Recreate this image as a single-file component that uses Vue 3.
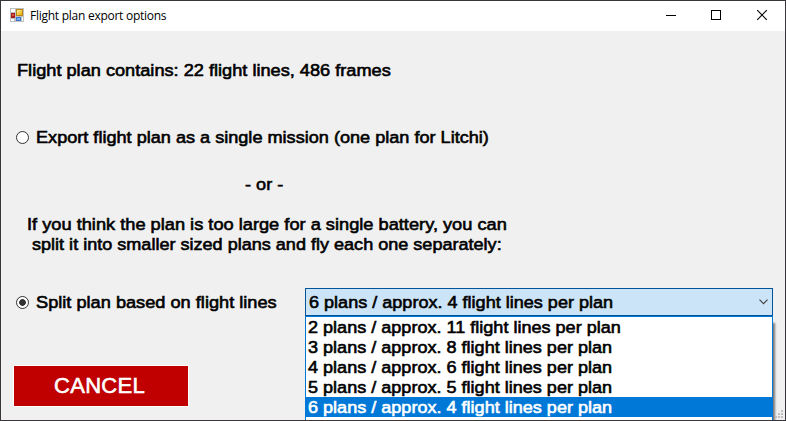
<script setup>
import { ref } from 'vue'

const mode = ref('split')
const selected = ref(4)
const plans = [
  '2 plans / approx. 11 flight lines per plan',
  '3 plans / approx. 8 flight lines per plan',
  '4 plans / approx. 6 flight lines per plan',
  '5 plans / approx. 5 flight lines per plan',
  '6 plans / approx. 4 flight lines per plan',
]
</script>

<template>
  <div class="window">
    <header class="titlebar">
      <svg class="app-icon" width="14" height="14" viewBox="0 0 14 14" shape-rendering="crispEdges">
        <defs>
          <linearGradient id="gold" x1="0" y1="0" x2="1" y2="1">
            <stop offset="0" stop-color="#fff0a0" />
            <stop offset="1" stop-color="#e8a800" />
          </linearGradient>
        </defs>
        <rect width="14" height="14" fill="#c0c0c0" />
        <rect x="1" y="1" width="4" height="3" fill="#fff" />
        <rect x="1" y="11" width="3" height="2" fill="#fff" />
        <rect x="12" y="9" width="1" height="4" fill="#fff" />
        <rect x="1" y="5" width="4" height="5" fill="#a51c1c" />
        <rect x="2" y="6" width="2" height="2" fill="#d55848" />
        <rect x="6" y="1" width="7" height="7" fill="#b78a18" />
        <rect x="7" y="2" width="5" height="5" fill="url(#gold)" />
        <rect x="6" y="9" width="5" height="4" fill="#3c78d0" />
        <rect x="7" y="10" width="3" height="2" fill="#76adf2" />
      </svg>
      <span class="title">Flight plan export options</span>
      <nav class="controls">
        <svg width="46" height="30" viewBox="0 0 46 30" shape-rendering="crispEdges"><path d="M18 14.5h10" stroke="#000" /></svg>
        <svg width="46" height="30" viewBox="0 0 46 30" shape-rendering="crispEdges"><path d="M17.5 9.500h9v9h-9z" fill="none" stroke="#000" /></svg>
        <svg width="46" height="30" viewBox="0 0 46 30"><path d="M17.200 9.200l9.600 9.600M26.800 9.200l-9.600 9.600" stroke="#000" stroke-width="1.100" /></svg>
      </nav>
    </header>

    <main class="body">
      <p class="summary text">Flight plan contains: 22 flight lines, 486 frames</p>

      <label class="choice single" @click="mode = 'single'">
        <span class="radio" :class="{ on: mode === 'single' }"></span>
        <span class="text">Export flight plan as a single mission (one plan for Litchi)</span>
      </label>

      <p class="or text">- or -</p>

      <div class="hint">
        <p class="hint-a text">If you think the plan is too large for a single battery, you can</p>
        <p class="hint-b text">split it into smaller sized plans and fly each one separately:</p>
      </div>

      <div class="row">
        <label class="choice split" @click="mode = 'split'">
          <span class="radio" :class="{ on: mode === 'split' }"></span>
          <span class="text">Split plan based on flight lines</span>
        </label>
        <div class="combo">
          <span class="text">{{ plans[selected] }}</span>
          <svg class="chevron" width="9" height="6" viewBox="0 0 9 6"><path d="M.5.7l4 4 4-4" fill="none" stroke="#404040" stroke-width="1.100" /></svg>
          <ul class="list">
            <li
              v-for="(plan, i) in plans"
              :key="plan"
              :class="{ active: i === selected }"
              @click="selected = i"
            ><span class="text">{{ plan }}</span></li>
          </ul>
        </div>
      </div>

      <button class="cancel"><span>CANCEL</span></button>

      <svg class="grip" width="9" height="9" viewBox="0 0 9 9" shape-rendering="crispEdges">
        <path d="M6 0h2v2h-2zM3 3h2v2h-2zM6 3h2v2h-2zM0 6h2v2h-2zM3 6h2v2h-2zM6 6h2v2h-2z" fill="#bfbfbf" />
      </svg>
    </main>
  </div>
</template>

<style>
html, body { margin: 0; overflow: hidden; }
</style>

<style scoped>
* { box-sizing: border-box; }
p, ul { margin: 0; padding: 0; }
.window {
  width: 786px;
  height: 421px;
  border: 1px solid #38363a;
  background: #f0f0f0;
  display: flex;
  flex-direction: column;
  overflow: hidden;
  color: #000;
  font-family: "Liberation Sans", Arial, sans-serif;
}
.titlebar {
  height: 30px;
  flex: none;
  background: #fff;
  display: flex;
  align-items: center;
  padding-left: 9px;
}
.app-icon { margin-bottom: 2px; }
.title {
  margin-left: 6px;
  font: 12px/16px "Open Sans", "Noto Sans", sans-serif;
  letter-spacing: -0.26px;
  white-space: nowrap;
}
.controls { margin: 0 -1px 0 auto; display: flex; }
.body { position: relative; flex: 1; display: flex; flex-direction: column; align-items: flex-start; }
.text {
  display: block;
  font-size: 17px;
  line-height: 20px;
  white-space: nowrap;
  transform: scaleX(1.065);
  transform-origin: 0 50%;
  -webkit-text-stroke: 0.6px currentColor;
}
.summary { margin: 30px 0 0 16px; transform: scaleX(1.069); }
.choice { display: flex; align-items: center; gap: 7px; }
.choice .text { padding-top: 2px; line-height: 18px; }
.single { margin: 46px 0 0 15px; }
.split .text { transform: scaleX(1.07); }
.or { margin: 28px 0 0 244px; }
.hint { margin: 20px 0 0 26px; }
.hint-a { transform: scaleX(1.072); }
.hint-b { margin-left: 5px; transform: scaleX(1.062); }
.radio {
  width: 13px;
  height: 13px;
  flex: none;
  border: 1px solid #333;
  border-radius: 50%;
  background: #fff;
}
.radio.on { background: radial-gradient(circle, #333 3px, #fff 3.7px); }
.row { display: flex; align-items: center; margin-top: 33px; height: 28px; }
.split { width: 289px; margin-left: 15px; }
.combo {
  position: relative;
  width: 468px;
  height: 28px;
  border: 1px solid #005499;
  background: #cce4f7;
  display: flex;
  align-items: center;
  justify-content: space-between;
  padding: 0 4px 0 3px;
}
.combo .text { transform: scaleX(1.062); }
.combo > .text { padding-top: 2px; }
.list {
  position: absolute;
  left: -1px;
  top: 27px;
  width: 468px;
  height: 132px;
  border: 1px solid #0078d7;
  background: #fff;
  list-style: none;
  box-shadow: 3px 6px 2px -1px rgba(0, 0, 0, 0.5);
}
.list li { height: 20px; padding-left: 2px; }
.list li .text { line-height: 22px; }
.list li.active { background: #0078d7; color: #fff; }
.cancel {
  width: 176px;
  height: 42px;
  margin: 49px 0 0 12px;
  padding: 0 3px 0 0;
  border: 1px solid #fff;
  border-radius: 0;
  background: #c00000;
  color: #fff;
  font: 22px/24px "Liberation Sans", Arial, sans-serif;
  letter-spacing: 0.3px;
  -webkit-text-stroke: 0.6px #fff;
}
.grip { position: absolute; right: 1px; bottom: 1px; }
</style>
